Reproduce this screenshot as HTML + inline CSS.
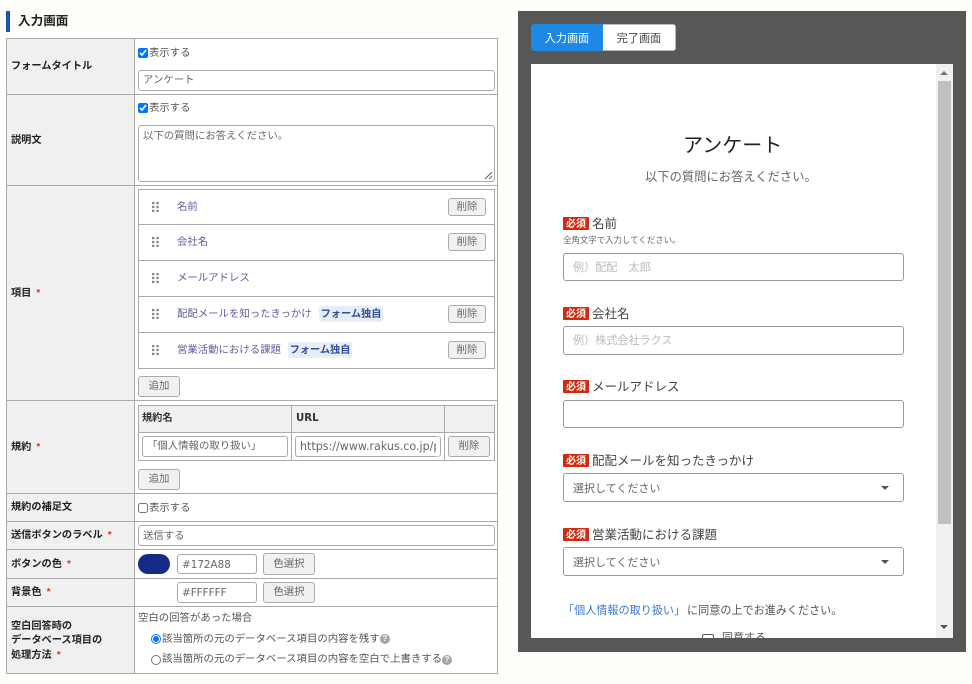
<!DOCTYPE html>
<html lang="ja"><head><meta charset="utf-8">
<style>
html,body{margin:0;padding:0}
body{width:972px;height:684px;position:relative;overflow:hidden;background:#fffefa;font-family:"Liberation Sans","Noto Sans CJK JP",sans-serif;color:#555;font-size:10.4px}
.a,.t,.l,.b,.f,.h{position:absolute;box-sizing:border-box}
.t,.l{white-space:nowrap;line-height:14px;height:14px;margin-top:2px}
.l{left:11px;font-weight:700;color:#222;font-size:10.2px}
.l i{font-style:normal;color:#c8452a;margin-left:5px}
.f{background:#fff;border:1px solid #aaa;border-radius:3px;line-height:20px;padding-left:4px;white-space:nowrap;overflow:hidden;color:#666}
.b{background:#f1f1f1;border:1px solid #aaa;border-radius:3px;text-align:center;color:#666;font-size:10.4px;line-height:18px}
.h{background:#aaa}
input{position:absolute;margin:0;width:10px;height:10px}
.n{color:#5f5f9f}
.d{position:absolute;width:7px;height:10px}
.tag{position:absolute;height:16px;width:64px;background:#e8eef8;border-radius:2px;color:#2f4f9f;font-weight:700;font-size:10.2px;line-height:17px;text-align:center}
.q{position:absolute;width:10px;height:10px;border-radius:50%;background:#a5a5a5;color:#fff;font-size:8px;line-height:10px;text-align:center;font-weight:700}
.req{position:absolute;left:563px;width:26px;height:13px;overflow:hidden;background:#d32a0e;color:#fff;font-size:10px;font-weight:700;line-height:15px;text-align:center;border-radius:1px}
.lb{position:absolute;left:592px;font-size:12.5px;line-height:16px;height:16px;color:#444;white-space:nowrap;margin-top:1px}
.in{position:absolute;left:563px;width:341px;background:#fff;border:1px solid #999;border-radius:3px;box-sizing:border-box;font-size:11.1px;color:#bbb;padding-left:9px;white-space:nowrap}
.sel{color:#666;font-size:11px}
.sel:after{content:"";position:absolute;right:14px;top:12px;border:4px solid transparent;border-top:4px solid #555;border-bottom:0}
</style></head><body>

<div class="a" style="left:6px;top:11px;width:4px;height:21px;background:#1a56b0"></div>
<div class="t" style="left:18px;top:12px;font-size:12.6px;font-weight:700;color:#222">入力画面</div>

<!-- table -->
<div class="a" style="left:6px;top:38px;width:492px;height:636px;background:#fff;border:1px solid #aaa"></div>
<div class="a" style="left:7px;top:39px;width:127px;height:634px;background:#f0f0f0"></div>
<div class="h" style="left:134px;top:38px;width:1px;height:636px"></div>
<div class="h" style="left:6px;top:94px;width:492px;height:1px"></div>
<div class="h" style="left:6px;top:185px;width:492px;height:1px"></div>
<div class="h" style="left:6px;top:400px;width:492px;height:1px"></div>
<div class="h" style="left:6px;top:493px;width:492px;height:1px"></div>
<div class="h" style="left:6px;top:521px;width:492px;height:1px"></div>
<div class="h" style="left:6px;top:549px;width:492px;height:1px"></div>
<div class="h" style="left:6px;top:578px;width:492px;height:1px"></div>
<div class="h" style="left:6px;top:606px;width:492px;height:1px"></div>

<div class="l" style="top:58px">フォームタイトル</div>
<div class="l" style="top:132px">説明文</div>
<div class="l" style="top:285px">項目<i>*</i></div>
<div class="l" style="top:439px">規約<i>*</i></div>
<div class="l" style="top:499px">規約の補足文</div>
<div class="l" style="top:527px">送信ボタンのラベル<i>*</i></div>
<div class="l" style="top:556px">ボタンの色<i>*</i></div>
<div class="l" style="top:584px">背景色<i>*</i></div>
<div class="l" style="top:618px">空白回答時の</div>
<div class="l" style="top:632px">データベース項目の</div>
<div class="l" style="top:647px">処理方法<i>*</i></div>

<input type="checkbox" checked style="left:138px;top:48px">
<div class="t" style="left:149px;top:45px">表示する</div>
<div class="f" style="left:138px;top:70px;width:357px;height:21px">アンケート</div>

<input type="checkbox" checked style="left:138px;top:103px">
<div class="t" style="left:149px;top:100px">表示する</div>
<div class="f" style="left:138px;top:125px;width:357px;height:57px;line-height:22px">以下の質問にお答えください。
<svg class="a" style="right:1px;bottom:1px" width="9" height="9"><path d="M1 8L8 1M5 8L8 5" stroke="#666" stroke-width="1"/></svg></div>

<!-- items -->
<div class="a" style="left:138px;top:189px;width:357px;height:180px;border:1px solid #aaa"></div>
<div class="h" style="left:138px;top:224px;width:357px;height:1px"></div>
<div class="h" style="left:138px;top:260px;width:357px;height:1px"></div>
<div class="h" style="left:138px;top:296px;width:357px;height:1px"></div>
<div class="h" style="left:138px;top:332px;width:357px;height:1px"></div>

<svg class="d" style="left:152px;top:202px" viewBox="0 0 7 10"><path d="M0 0h2.4v2.2H0zM4.4 0h2.4v2.2H4.4zM0 3.9h2.4v2.2H0zM4.4 3.9h2.4v2.2H4.4zM0 7.8h2.4V10H0zM4.4 7.8h2.4V10H4.4z" fill="#888"/></svg>
<svg class="d" style="left:152px;top:237px" viewBox="0 0 7 10"><path d="M0 0h2.4v2.2H0zM4.4 0h2.4v2.2H4.4zM0 3.9h2.4v2.2H0zM4.4 3.9h2.4v2.2H4.4zM0 7.8h2.4V10H0zM4.4 7.8h2.4V10H4.4z" fill="#888"/></svg>
<svg class="d" style="left:152px;top:273px" viewBox="0 0 7 10"><path d="M0 0h2.4v2.2H0zM4.4 0h2.4v2.2H4.4zM0 3.9h2.4v2.2H0zM4.4 3.9h2.4v2.2H4.4zM0 7.8h2.4V10H0zM4.4 7.8h2.4V10H4.4z" fill="#888"/></svg>
<svg class="d" style="left:152px;top:309px" viewBox="0 0 7 10"><path d="M0 0h2.4v2.2H0zM4.4 0h2.4v2.2H4.4zM0 3.9h2.4v2.2H0zM4.4 3.9h2.4v2.2H4.4zM0 7.8h2.4V10H0zM4.4 7.8h2.4V10H4.4z" fill="#888"/></svg>
<svg class="d" style="left:152px;top:345px" viewBox="0 0 7 10"><path d="M0 0h2.4v2.2H0zM4.4 0h2.4v2.2H4.4zM0 3.9h2.4v2.2H0zM4.4 3.9h2.4v2.2H4.4zM0 7.8h2.4V10H0zM4.4 7.8h2.4V10H4.4z" fill="#888"/></svg>

<div class="t n" style="left:177px;top:199px">名前</div>
<div class="t n" style="left:177px;top:234px">会社名</div>
<div class="t n" style="left:177px;top:270px">メールアドレス</div>
<div class="t n" style="left:177px;top:306px">配配メールを知ったきっかけ</div>
<div class="t n" style="left:177px;top:342px">営業活動における課題</div>
<div class="tag" style="left:319px;top:306px">フォーム独自</div>
<div class="tag" style="left:288px;top:342px">フォーム独自</div>
<div class="b" style="left:448px;top:198px;width:38px;height:18px">削除</div>
<div class="b" style="left:448px;top:233px;width:38px;height:18px">削除</div>
<div class="b" style="left:448px;top:305px;width:38px;height:18px">削除</div>
<div class="b" style="left:448px;top:341px;width:38px;height:18px">削除</div>
<div class="b" style="left:138px;top:376px;width:42px;height:21px;line-height:20px">追加</div>

<!-- terms -->
<div class="a" style="left:138px;top:405px;width:357px;height:56px;border:1px solid #aaa"></div>
<div class="a" style="left:139px;top:406px;width:355px;height:26px;background:#f0f0f0"></div>
<div class="h" style="left:138px;top:432px;width:357px;height:1px"></div>
<div class="h" style="left:291px;top:405px;width:1px;height:56px"></div>
<div class="h" style="left:444px;top:405px;width:1px;height:56px"></div>
<div class="t" style="left:142px;top:410px;font-weight:700;color:#333;font-size:10.2px">規約名</div>
<div class="t" style="left:296px;top:410px;font-weight:700;color:#333;font-size:10.2px;font-family:'DejaVu Sans',sans-serif">URL</div>
<div class="f" style="left:142px;top:436px;width:146px;height:21px;">「個人情報の取り扱い」</div>
<div class="f" style="left:295px;top:436px;width:145px;height:21px;font-family:'DejaVu Sans',sans-serif;font-size:11.1px;padding-right:3px;border-right:4px solid #fff;box-shadow:1px 0 0 #aaa">https://www.rakus.co.jp/privacy</div>
<div class="b" style="left:448px;top:436px;width:42px;height:21px;line-height:19px">削除</div>
<div class="b" style="left:138px;top:469px;width:42px;height:21px;line-height:19px">追加</div>

<input type="checkbox" style="left:138px;top:503px">
<div class="t" style="left:149px;top:500px">表示する</div>
<div class="f" style="left:138px;top:525px;width:357px;height:21px;line-height:21px">送信する</div>

<div class="a" style="left:138px;top:554px;width:32px;height:20px;background:#172a88;border-radius:10px"></div>
<div class="f" style="left:177px;top:554px;width:80px;height:20px;font-family:'DejaVu Sans',sans-serif;font-size:10.4px;padding-left:4px">#172A88</div>
<div class="b" style="left:263px;top:553px;width:52px;height:22px;line-height:21px">色選択</div>
<div class="f" style="left:177px;top:582px;width:80px;height:21px;font-family:'DejaVu Sans',sans-serif;font-size:10.4px;padding-left:4px">#FFFFFF</div>
<div class="b" style="left:263px;top:582px;width:52px;height:21px;line-height:19px">色選択</div>

<div class="t" style="left:138px;top:610px">空白の回答があった場合</div>
<input type="radio" name="r" checked style="left:151px;top:634px">
<div class="t" style="left:162px;top:631px">該当箇所の元のデータベース項目の内容を残す</div>
<div class="q" style="left:380px;top:634px">?</div>
<input type="radio" name="r" style="left:151px;top:655px">
<div class="t" style="left:162px;top:651px">該当箇所の元のデータベース項目の内容を空白で上書きする</div>
<div class="q" style="left:442px;top:655px">?</div>

<!-- preview -->
<div class="a" style="left:518px;top:11px;width:448px;height:641px;background:#575757"></div>
<div class="a" style="left:531px;top:24px;width:72px;height:27px;background:#1e88e5;border-radius:3px 0 0 3px;color:#fff;text-align:center;line-height:30px;font-size:11.1px">入力画面</div>
<div class="a" style="left:603px;top:24px;width:73px;height:27px;background:#fff;border:1px solid #bbb;border-left:0;border-radius:0 3px 3px 0;color:#444;text-align:center;line-height:28px;font-size:11.1px">完了画面</div>

<div class="a" style="left:531px;top:64px;width:422px;height:574px;background:#fff;overflow:hidden">
  <div class="a" style="left:405px;top:0;width:17px;height:574px;background:#f0f0f0"></div>
  <div class="a" style="left:407px;top:17px;width:13px;height:443px;background:#c0c0c0"></div>
  <div class="a" style="left:409px;top:7px;border:4px solid transparent;border-bottom:4px solid #777;border-top:0"></div>
  <div class="a" style="left:409px;top:561px;border:4px solid transparent;border-top:4px solid #555;border-bottom:0"></div>
  <div class="a" style="left:171px;top:570px;width:12px;height:12px;border:1px solid #555;border-radius:2px"></div>
  <div class="a" style="left:191px;top:566px;font-size:11px;color:#555;line-height:16px;white-space:nowrap">同意する</div>
</div>
<div class="t" style="left:683px;top:132px;height:24px;line-height:24px;font-size:20px;color:#222">アンケート</div>
<div class="t" style="left:645px;top:167px;height:16px;line-height:16px;font-size:12.3px;color:#666">以下の質問にお答えください。</div>

<div class="req" style="top:217px">必須</div>
<div class="lb" style="top:215px">名前</div>
<div class="t" style="left:563px;top:231px;font-size:8.45px;color:#666">全角文字で入力してください。</div>
<div class="in" style="top:253px;height:28px;line-height:28px">例）配配　太郎</div>

<div class="req" style="top:307px">必須</div>
<div class="lb" style="top:305px">会社名</div>
<div class="in" style="top:326px;height:29px;line-height:29px">例）株式会社ラクス</div>

<div class="req" style="top:380px">必須</div>
<div class="lb" style="top:378px">メールアドレス</div>
<div class="in" style="top:400px;height:28px"></div>

<div class="req" style="top:454px">必須</div>
<div class="lb" style="top:452px">配配メールを知ったきっかけ</div>
<div class="in sel" style="top:473px;height:29px;line-height:31px">選択してください</div>

<div class="req" style="top:528px">必須</div>
<div class="lb" style="top:526px">営業活動における課題</div>
<div class="in sel" style="top:547px;height:29px;line-height:31px">選択してください</div>

<div class="t" style="left:563px;top:602px;font-size:11.1px;color:#555"><span style="color:#3a78d8">「個人情報の取り扱い」</span><span style="margin-left:2px">に同意の上でお進みください。</span></div>

</body></html>
